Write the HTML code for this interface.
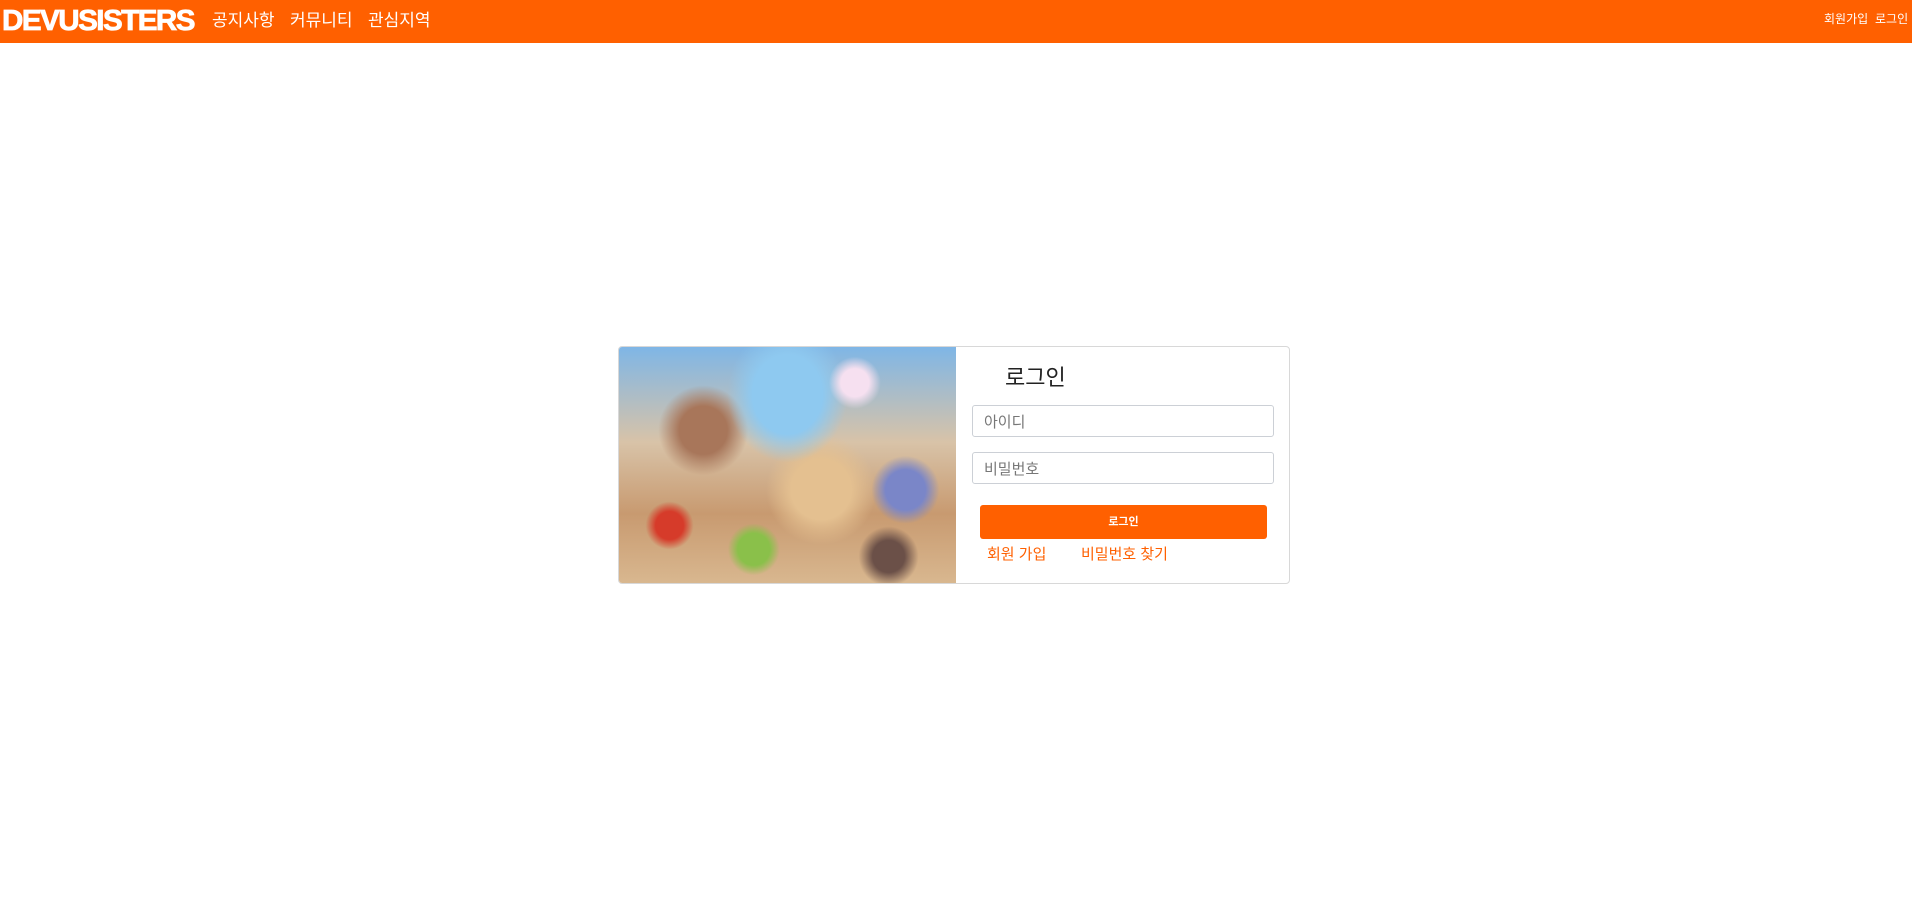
<!DOCTYPE html>
<html><head><meta charset="utf-8"><style>
*{box-sizing:border-box;margin:0;padding:0}
body{width:1912px;height:921px;background:#fff;font-family:"Liberation Sans","Noto Sans CJK KR",sans-serif;position:relative;overflow:hidden}
.nav{position:absolute;left:0;top:0;width:1912px;height:43px;background:#ff6000}
.logo{position:absolute;left:2px;top:5px;color:#fff;font-weight:900;font-size:29px;letter-spacing:-1.5px;font-family:"Liberation Sans",sans-serif;transform:scaleX(1.02);transform-origin:left;-webkit-text-stroke:0.8px #fff}
.m{position:absolute;top:6px;color:#fff;font-size:17px}
.r{position:absolute;top:10px;color:#fff;font-size:12px}
.card{position:absolute;left:618px;top:346px;width:672px;height:238px;border:1px solid #d8d8d8;border-radius:4px;overflow:hidden}
.img{position:absolute;left:0;top:0;width:337px;height:238px;background:
radial-gradient(circle at 70% 15%,#f6e0f0 0 14px,transparent 26px),
radial-gradient(ellipse at 50% 20%,#8ec9f0 0 35px,transparent 60px),
radial-gradient(circle at 15% 75%,#d63b2a 0 14px,transparent 24px),
radial-gradient(circle at 40% 85%,#8ac04a 0 16px,transparent 26px),
radial-gradient(circle at 85% 60%,#7a86c8 0 20px,transparent 34px),
radial-gradient(circle at 25% 35%,#a8765a 0 24px,transparent 45px),
radial-gradient(circle at 60% 60%,#e4c090 0 30px,transparent 55px),
radial-gradient(circle at 80% 88%,#6b5048 0 16px,transparent 30px),
linear-gradient(180deg,#7fb6e6 0%,#d8c3a8 40%,#c89a70 70%,#d9b890 100%)}
.title{position:absolute;left:386px;top:13px;font-size:22px;color:#222}
.in{position:absolute;left:353px;width:302px;height:32px;border:1px solid #ccd0d6;border-radius:3px;font-size:15px;color:#777;padding:5px 11px}
.btn{position:absolute;left:361px;top:158px;width:287px;height:34px;background:#ff6000;border-radius:3px;color:#fff;font-size:11px;font-weight:bold;text-align:center;line-height:34px}
.lk{position:absolute;top:196px;color:#ff6000;font-size:15px}
</style></head><body>
<div class="nav">
<div class="logo">DEVUSISTERS</div>
<div class="m" style="left:212px">공지사항</div>
<div class="m" style="left:290px">커뮤니티</div>
<div class="m" style="left:368px">관심지역</div>
<div class="r" style="left:1824px">회원가입</div>
<div class="r" style="left:1875px">로그인</div>
</div>
<div class="card">
<div class="img"></div>
<div class="title">로그인</div>
<div class="in" style="top:58px">아이디</div>
<div class="in" style="top:105px">비밀번호</div>
<div class="btn">로그인</div>
<div class="lk" style="left:368px">회원 가입</div>
<div class="lk" style="left:462px">비밀번호 찾기</div>
</div>
</body></html>
